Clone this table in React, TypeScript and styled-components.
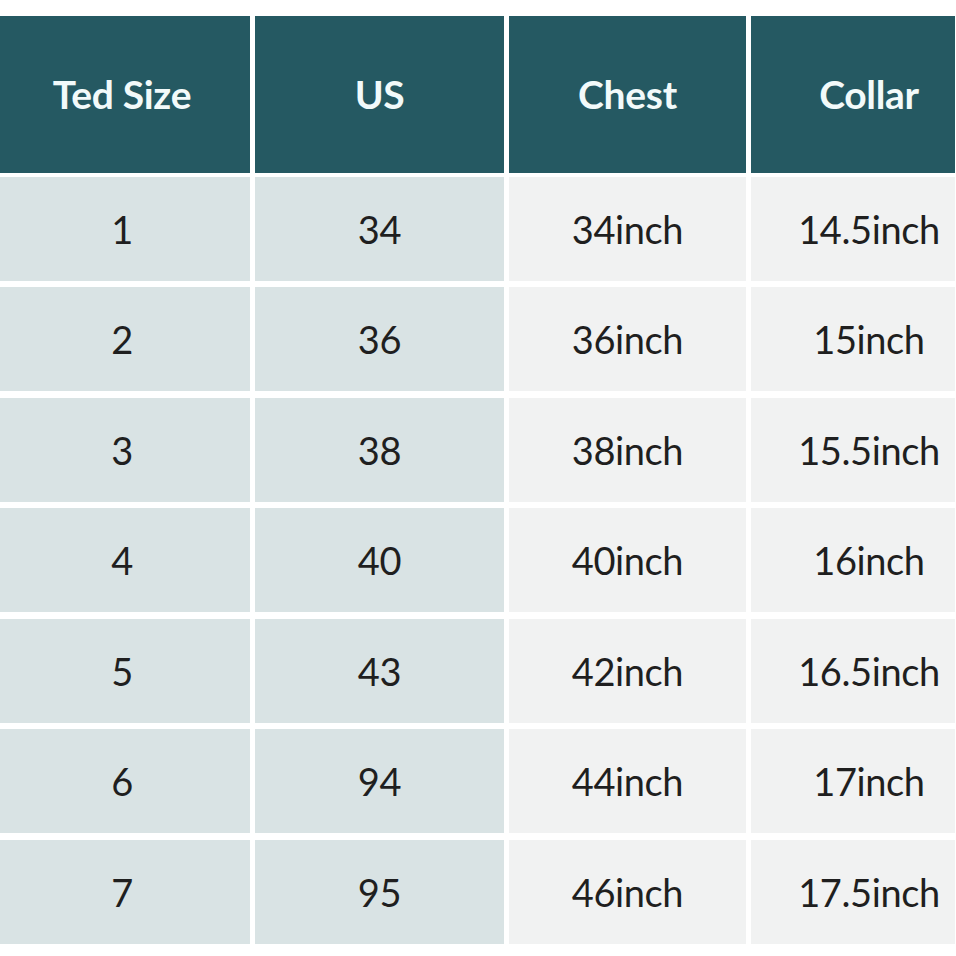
import React from "react";
import styled, { createGlobalStyle } from "styled-components";

const Global = createGlobalStyle`
  html, body { margin: 0; padding: 0; background: #ffffff; }
  body { font-family: Lato, "Open Sans", sans-serif; }
`;

const Page = styled.div`
  padding-top: 16px;
  width: 956px;
`;

const Table = styled.div`
  display: grid;
  grid-template-columns: 250px 249px 237px 204px;
  grid-template-rows: 154px;
  grid-auto-rows: 104px;
  column-gap: 5px;
  row-gap: 6.5px;
  & > :nth-child(-n + 4) {
    margin-bottom: -2.5px;
  }
`;

const shiftCss = (s?: number) =>
  s && s < 0 ? `padding-right: ${-s * 2}px;` : `padding-left: ${(s ?? 0) * 2}px;`;

const HeadCell = styled.div<{ $shift?: number }>`
  background: #255962;
  color: #f2fafa;
  font-weight: 700;
  font-size: 39px;
  display: flex;
  align-items: center;
  justify-content: center;
  letter-spacing: -0.3px;
  ${(p) => shiftCss(p.$shift)}
`;

const Cell = styled.div<{ $tone: "blue" | "grey"; $shift?: number }>`
  background: ${(p) => (p.$tone === "blue" ? "#d9e3e4" : "#f1f2f2")};
  color: #1f1f1f;
  font-size: 38px;
  font-weight: 400;
  display: flex;
  align-items: center;
  justify-content: center;
  letter-spacing: -0.4px;
  ${(p) => shiftCss(p.$shift)}
`;

const headers = ["Ted Size", "US", "Chest", "Collar"];
const rows = [
  ["1", "34", "34inch", "14.5inch"],
  ["2", "36", "36inch", "15inch"],
  ["3", "38", "38inch", "15.5inch"],
  ["4", "40", "40inch", "16inch"],
  ["5", "43", "42inch", "16.5inch"],
  ["6", "94", "44inch", "17inch"],
  ["7", "95", "46inch", "17.5inch"],
];
const shifts = [-3, 0, 0, 16];

export default function App() {
  return (
    <>
      <Global />
      <Page>
        <Table>
          {headers.map((h, i) => (
            <HeadCell key={h} $shift={shifts[i]}>
              {h}
            </HeadCell>
          ))}
          {rows.map((r, ri) =>
            r.map((v, ci) => (
              <Cell
                key={`${ri}-${ci}`}
                $tone={ci < 2 ? "blue" : "grey"}
                $shift={shifts[ci]}
              >
                {v}
              </Cell>
            ))
          )}
        </Table>
      </Page>
    </>
  );
}
